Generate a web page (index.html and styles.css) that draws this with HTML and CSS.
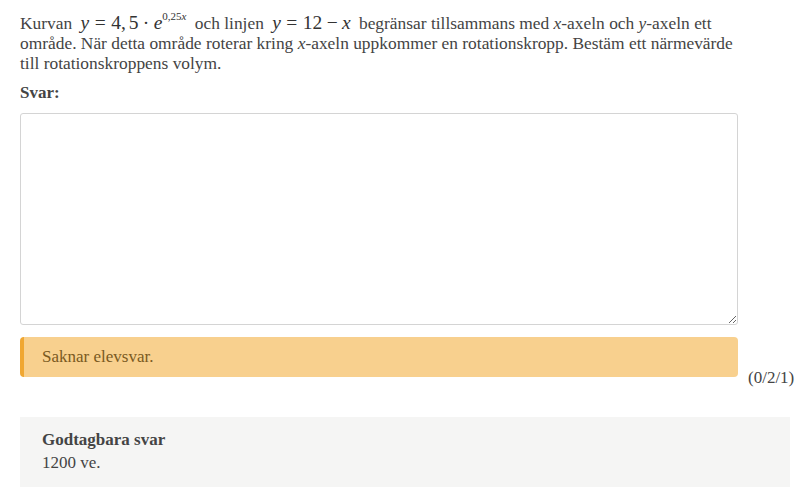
FILE: index.html
```html
<!DOCTYPE html>
<html lang="sv">
<head>
<meta charset="utf-8">
<link rel="stylesheet" href="styles.css">
</head>
<body>
<div class="page">
  <p class="question">Kurvan <span class="math"><i>y</i><span class="rel">=</span>4,<span class="thin"></span>5<span class="bin">·</span><i>e</i><sup class="sup">0,25<i>x</i></sup></span> och linjen <span class="math"><i>y</i><span class="rel">=</span>12<span class="bin">−</span><i>x</i></span> begränsar tillsammans med <i>x</i>-axeln och <i>y</i>-axeln ett område. När detta område roterar kring <i>x</i>-axeln uppkommer en rotationskropp. Bestäm ett närmevärde till rotationskroppens volym.</p>
  <div class="label">Svar:</div>
  <div class="answer-row">
    <div class="answer-col">
      <textarea class="answer"></textarea>
      <div class="alert">Saknar elevsvar.</div>
    </div>
    <div class="points">(0/2/1)</div>
  </div>
  <div class="accepted">
    <div class="accepted-title">Godtagbara svar</div>
    <div>1200 ve.</div>
  </div>
</div>
</body>
</html>
```
FILE: styles.css
```css
html, body {
  margin: 0;
  padding: 0;
  background: #fff;
}
body {
  font-family: "Liberation Serif", "Times New Roman", serif;
  font-size: 17px;
  line-height: 20px;
  color: #444;
}
.page {
  padding: 9px 10px 0 20px;
}
.question {
  margin: 0;
  width: 718px;
  font-size: 17.4px;
}
.math {
  font-family: "Liberation Serif", "Times New Roman", serif;
  font-size: 19.5px;
  color: #333;
  margin: 0 4px;
  white-space: nowrap;
}
.math i {
  font-family: "Liberation Serif", "Times New Roman", serif;
  font-style: italic;
}
.rel {
  margin: 0 5.5px;
}
.bin {
  margin: 0 4.3px;
}
.thin {
  display: inline-block;
  width: 3px;
}
.sup {
  font-size: 11px;
  line-height: 14px;
  vertical-align: 9px;
}
.label {
  font-weight: bold;
  margin-top: 10px;
}
.answer-row {
  display: flex;
  margin-top: 10px;
}
.answer-col {
  width: 718px;
  display: flex;
  flex-direction: column;
  gap: 12px;
}
.answer {
  box-sizing: border-box;
  width: 718px;
  height: 212px;
  border: 1px solid #d4d4d4;
  border-radius: 3px;
  margin: 0;
  display: block;
  font: inherit;
}
.alert {
  height: 40px;
  box-sizing: border-box;
  background: #f8d08e;
  border-left: 4px solid #f0a732;
  border-radius: 4px;
  padding: 10px 18px;
  color: #7a5a22;
}
.points {
  margin-left: 10px;
  padding-top: 255px;
  color: #444;
}
.accepted {
  width: 770px;
  box-sizing: border-box;
  margin-top: 29px;
  background: #f5f5f4;
  padding: 11px 22px 13px;
  line-height: 23px;
}
.accepted-title {
  font-weight: bold;
}
```
